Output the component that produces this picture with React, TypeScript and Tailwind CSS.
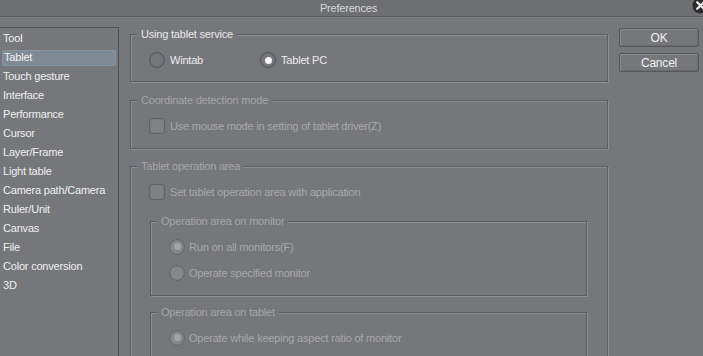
import React from "react";

const FONT = { fontFamily: '"Liberation Sans", Arial, sans-serif', letterSpacing: "-0.2px" };

function Radio({ checked, disabled }: { checked?: boolean; disabled?: boolean }) {
  return (
    <span
      className={
        "relative flex h-[16px] w-[16px] shrink-0 items-center justify-center rounded-full border " +
        (disabled ? "border-[#66676a] bg-[#86878a]" : "border-[#56575a] bg-[#76777b]")
      }
      style={{ boxShadow: disabled ? "inset 0 0 0 1px #7e7f82" : "inset 0 0 0 1px #6d6e71" }}
    >
      {checked && (
        <span className={"h-[7px] w-[7px] rounded-full " + (disabled ? "bg-[#a3a4a6]" : "bg-[#f4f4f4]")} />
      )}
    </span>
  );
}

function Check() {
  return (
    <span
      className="h-[16px] w-[16px] shrink-0 rounded-[3px] border border-[#626366] bg-[#808184]"
      style={{ boxShadow: "inset 0 0 0 1px #7a7b7e" }}
    />
  );
}

function Group({
  label,
  disabled,
  className,
  children,
}: {
  label: string;
  disabled?: boolean;
  className?: string;
  children?: React.ReactNode;
}) {
  return (
    <div
      className={"relative border border-[#5d5e61] " + (className ?? "")}
      style={{ boxShadow: "inset 1px 1px 0 #8d8e91, 1px 1px 0 #8d8e91" }}
    >
      <span
        className={
          "absolute -top-[8px] left-[6px] bg-[#76777b] px-[4px] text-[11px] leading-[14px] " +
          (disabled ? "text-[#a4a5a8]" : "text-[#e8e8e8]")
        }
      >
        {label}
      </span>
      {children}
    </div>
  );
}

const items = [
  "Tool",
  "Tablet",
  "Touch gesture",
  "Interface",
  "Performance",
  "Cursor",
  "Layer/Frame",
  "Light table",
  "Camera path/Camera",
  "Ruler/Unit",
  "Canvas",
  "File",
  "Color conversion",
  "3D",
];

export default function App() {
  return (
    <div className="relative h-[356px] w-[703px] overflow-hidden bg-[#76777b] text-[11px]" style={FONT}>
      {/* Title bar */}
      <div className="flex h-[16px] items-center justify-center bg-[#6e6f72] text-[11px] text-[#d6d6d6]">
        <span className="ml-[-6px]">Preferences</span>
      </div>
      <div className="h-px bg-[#58595c]" />
      <div className="h-px bg-[#7f8083]" />
      <svg className="absolute right-[-6px] top-[-3px]" width="17" height="17" viewBox="0 0 17 17">
        <circle cx="8.5" cy="8.5" r="8" fill="#2b2b2c" />
        <path d="M5.2 5.2 L11.8 11.8 M11.8 5.2 L5.2 11.8" stroke="#f2f2f2" strokeWidth="2.2" strokeLinecap="round" />
      </svg>

      <div className="mt-[9px] flex">
        {/* Sidebar */}
        <div className="h-[340px] w-[119px] shrink-0 border-r border-t border-[#4f5053] pt-px">
          {items.map((it) =>
            it === "Tablet" ? (
              <div key={it} className="flex h-[19px] items-center px-[2px]">
                <div className="flex h-[16px] w-full items-center rounded-[2px] border border-[#8797a1] bg-[#7e8b94] px-px text-[#f2f2f2]">
                  {it}
                </div>
              </div>
            ) : (
              <div key={it} className="flex h-[19px] items-center px-[3px] text-[#efefef]">
                {it}
              </div>
            )
          )}
        </div>

        {/* Main */}
        <div className="ml-[11px] mt-[7px] flex w-[478px] shrink-0 flex-col">
          <Group label="Using tablet service" className="h-[48px]">
            <div className="flex items-center pl-[18px] pt-[17px] text-[#ececec]">
              <Radio />
              <span className="ml-[5px]">Wintab</span>
              <span className="ml-[57px]">
                <Radio checked />
              </span>
              <span className="ml-[5px]">Tablet PC</span>
            </div>
          </Group>

          <Group label="Coordinate detection mode" disabled className="mt-[18px] h-[49px]">
            <div className="flex items-center pl-[18px] pt-[17px] text-[#a6a7aa]">
              <Check />
              <span className="ml-[5px]">Use mouse mode in setting of tablet driver(Z)</span>
            </div>
          </Group>

          <Group label="Tablet operation area" disabled className="mt-[17px] h-[220px]">
            <div className="flex items-center pl-[18px] pt-[17px] text-[#a6a7aa]">
              <Check />
              <span className="ml-[5px]">Set tablet operation area with application</span>
            </div>
            <div className="ml-[19px] mr-[20px] mt-[20px]">
              <Group label="Operation area on monitor" disabled className="h-[75px]">
                <div className="flex items-center pl-[18px] pt-[17px] text-[#a6a7aa]">
                  <Radio checked disabled />
                  <span className="ml-[4px]">Run on all monitors(F)</span>
                </div>
                <div className="mt-[10px] flex items-center pl-[18px] text-[#a6a7aa]">
                  <Radio disabled />
                  <span className="ml-[4px]">Operate specified monitor</span>
                </div>
              </Group>
              <Group label="Operation area on tablet" disabled className="mt-[16px] h-[80px]">
                <div className="flex items-center pl-[18px] pt-[17px] text-[#a6a7aa]">
                  <Radio checked disabled />
                  <span className="ml-[4px]">Operate while keeping aspect ratio of monitor</span>
                </div>
              </Group>
            </div>
          </Group>
        </div>

        {/* Buttons */}
        <div className="ml-[11px] flex w-[80px] shrink-0 flex-col gap-[6px] pt-px">
          {["OK", "Cancel"].map((b) => (
            <div
              key={b}
              className="flex h-[19px] items-center justify-center rounded-[2px] border border-[#56575a] text-[12px] text-[#f0f0f0]"
              style={{ boxShadow: "inset 1px 1px 0 #88898c, inset -1px -1px 0 #6a6b6e" }}
            >
              {b}
            </div>
          ))}
        </div>
      </div>
    </div>
  );
}
